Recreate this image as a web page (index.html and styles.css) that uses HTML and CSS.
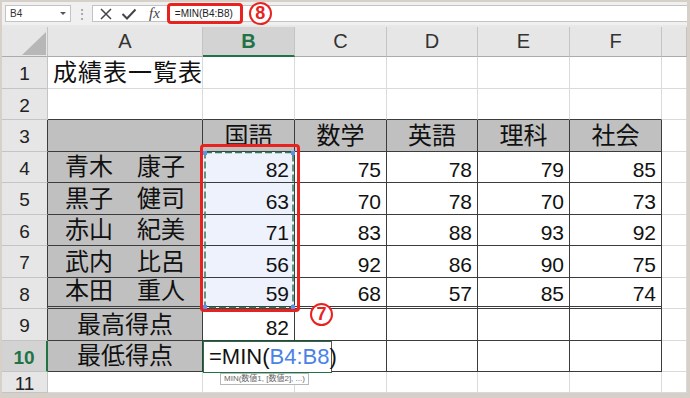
FILE: index.html
```html
<!DOCTYPE html>
<html lang="ja">
<head>
    <meta charset="UTF-8">
    <meta name="viewport" content="width=device-width, initial-scale=1.0">
    <title>成績表一覧表 - MIN関数</title>
    <link rel="stylesheet" href="styles.css">
</head>
<body>
<div class="window">
    <div class="formula-bar">
        <div class="name-box">B4<span class="caret"></span></div>
        <div class="dots">⋮</div>
        <div class="fx-area">
            <svg class="btn" width="14" height="14" viewBox="0 0 14 14"><path d="M2 2L12 12M12 2L2 12" stroke="#444" stroke-width="1.5" fill="none"/></svg>
            <svg class="btn check" width="16" height="14" viewBox="0 0 16 14"><path d="M1.5 7L6 11.5L14.5 2.5" stroke="#444" stroke-width="2" fill="none"/></svg>
            <span class="fx">fx</span>
            <span class="formula">=MIN(B4:B8)</span>
            <span class="mark">8</span>
        </div>
    </div>

    <div class="sheet">
        <div class="grid">
            <div class="corner"><span class="tri"></span></div>
            <div class="ch">A</div><div class="ch sel">B</div><div class="ch">C</div><div class="ch">D</div><div class="ch">E</div><div class="ch">F</div><div class="ch"></div>

            <div class="rh">1</div>
            <div class="c jp title">成績表一覧表</div><div class="c"></div><div class="c"></div><div class="c"></div><div class="c"></div><div class="c"></div><div class="c"></div>

            <div class="rh">2</div>
            <div class="c top"></div><div class="c top"></div><div class="c top"></div><div class="c top"></div><div class="c top"></div><div class="c top"></div><div class="c"></div>

            <div class="rh edge">3</div>
            <div class="c t g"></div><div class="c t g jp ctr">国語</div><div class="c t g jp ctr">数学</div><div class="c t g jp ctr">英語</div><div class="c t g jp ctr">理科</div><div class="c t g jp ctr">社会</div><div class="c"></div>

            <div class="rh edge">4</div>
            <div class="c t g jp ctr">青木　康子</div><div class="c t hl num">82</div><div class="c t num">75</div><div class="c t num">78</div><div class="c t num">79</div><div class="c t num">85</div><div class="c"></div>

            <div class="rh edge">5</div>
            <div class="c t g jp ctr">黒子　健司</div><div class="c t hl num">63</div><div class="c t num">70</div><div class="c t num">78</div><div class="c t num">70</div><div class="c t num">73</div><div class="c"></div>

            <div class="rh edge">6</div>
            <div class="c t g jp ctr">赤山　紀美</div><div class="c t hl num">71</div><div class="c t num">83</div><div class="c t num">88</div><div class="c t num">93</div><div class="c t num">92</div><div class="c"></div>

            <div class="rh edge">7</div>
            <div class="c t g jp ctr">武内　比呂</div><div class="c t hl num">56</div><div class="c t num">92</div><div class="c t num">86</div><div class="c t num">90</div><div class="c t num">75</div><div class="c"></div>

            <div class="rh edge">8</div>
            <div class="c t g dbl jp ctr">本田　重人</div><div class="c t hl dbl num">59</div><div class="c t dbl num">68</div><div class="c t dbl num">57</div><div class="c t dbl num">85</div><div class="c t dbl num">74</div><div class="c"></div>

            <div class="rh edge">9</div>
            <div class="c t g jp ctr">最高得点</div><div class="c t num">82</div><div class="c t"></div><div class="c t"></div><div class="c t"></div><div class="c t"></div><div class="c"></div>

            <div class="rh edge sel">10</div>
            <div class="c t g jp ctr">最低得点</div><div class="c t"></div><div class="c t"></div><div class="c t"></div><div class="c t"></div><div class="c t"></div><div class="c"></div>

            <div class="rh">11</div>
            <div class="c"></div><div class="c"></div><div class="c"></div><div class="c"></div><div class="c"></div><div class="c"></div><div class="c"></div>
        </div>

        <!-- range reference marquee around B4:B8 -->
        <svg class="marquee" width="92" height="158" viewBox="0 0 92 158">
            <rect x="2" y="1.5" width="88" height="155" fill="none" stroke="#2f7a55" stroke-width="1.5" stroke-dasharray="7 3"/>
            <rect x="0" y="0" width="4" height="4" fill="#5b8ff0"/>
            <rect x="88" y="0" width="4" height="4" fill="#5b8ff0"/>
            <rect x="0" y="154" width="4" height="4" fill="#5b8ff0"/>
            <rect x="88" y="154" width="4" height="4" fill="#5b8ff0"/>
        </svg>
        <div class="callout"></div>
        <span class="mark mark-7">7</span>

        <div class="edit">=MIN(<span class="ref">B4:B8</span>)</div>
        <div class="tip">MIN(数値1, [数値2], ...)</div>
    </div>
</div>
</body>
</html>
```

FILE: styles.css
```css
body {
    margin: 0;
    font-family: "Liberation Sans", "Noto Sans CJK JP", sans-serif;
}
.window {
    width: 690px;
    height: 398px;
    box-sizing: border-box;
    border: solid #d6d0c9;
    border-width: 2px 3px 5px 2px;
    background: #e8e8e8;
    overflow: hidden;
}

/* formula bar */
.formula-bar {
    height: 23px;
    display: flex;
    align-items: center;
    background: #f0f0f0;
    padding-left: 3px;
}
.name-box {
    width: 66px;
    height: 17px;
    box-sizing: border-box;
    border: 1px solid #c3c3c3;
    background: #fff;
    font-size: 10px;
    color: #333;
    display: flex;
    align-items: center;
    justify-content: space-between;
    padding: 0 4px;
}
.caret {
    border: 3px solid transparent;
    border-top: 3px solid #555;
    margin-top: 3px;
}
.dots {
    width: 21px;
    text-align: center;
    color: #888;
    font-size: 12px;
}
.fx-area {
    flex: 1;
    height: 17px;
    box-sizing: border-box;
    border: 1px solid #c3c3c3;
    border-right: none;
    background: #fff;
    display: flex;
    align-items: center;
    padding-left: 6px;
}
.btn {
    margin-right: 8px;
}
.check {
    margin-right: 12px;
}
.fx {
    font-family: "Liberation Serif", serif;
    font-style: italic;
    font-size: 15px;
    color: #444;
    margin-right: 7px;
}
.formula {
    width: 76px;
    height: 21px;
    box-sizing: border-box;
    border: 3px solid #e8231f;
    border-radius: 4px;
    font-size: 10px;
    color: #222;
    display: flex;
    align-items: center;
    padding-left: 5px;
}
.mark {
    width: 23px;
    height: 23px;
    box-sizing: border-box;
    border: 2px solid #e8231f;
    border-radius: 50%;
    color: #e8231f;
    font-weight: bold;
    font-size: 18px;
    display: flex;
    align-items: center;
    justify-content: center;
    margin-left: 6px;
    background: #fff;
}

/* sheet */
.sheet {
    position: relative;
    height: 366px;
    margin-top: 2px;
    background: #fff;
    overflow: hidden;
}
.grid {
    display: grid;
    grid-template-columns: 46px 155px 92px 92px 91px 92px 92px 25px;
    grid-template-rows: 30px repeat(10, 31.5px) 21px;
}
.grid > div {
    box-sizing: border-box;
    border-right: 1px solid #dadada;
    border-bottom: 1px solid #dadada;
    display: flex;
    align-items: flex-end;
    padding: 0 5px;
    font-size: 21px;
    line-height: 25px;
    color: #111;
    white-space: nowrap;
    min-width: 0;
}
.grid > .corner {
    background: #e6e6e6;
    border-right-color: #c4c4c4;
    border-bottom-color: #ababab;
    justify-content: flex-end;
    padding: 0 1px 1px 0;
}
.tri {
    width: 24px;
    height: 23px;
    background: #b7b7b7;
    clip-path: polygon(100% 0, 100% 100%, 0 100%);
}
.grid > .ch {
    background: #e6e6e6;
    border-right-color: #c4c4c4;
    border-bottom-color: #ababab;
    justify-content: center;
    align-items: center;
    font-size: 20px;
    color: #333;
}
.grid > .ch.sel {
    background: #d3d3d3;
    border-bottom: 2px solid #217346;
    color: #217346;
    font-weight: bold;
}
.grid > .rh {
    background: #e6e6e6;
    border-right-color: #c4c4c4;
    border-bottom-color: #c4c4c4;
    justify-content: center;
    align-items: center;
    font-size: 19px;
    color: #222;
    padding: 3px 0 0;
}
.grid > .rh.edge {
    border-right-color: #3c3c3c;
}
.grid > .rh.sel {
    background: #d3d3d3;
    border-right: 2px solid #217346;
    color: #217346;
    font-weight: bold;
}
.grid > .top {
    border-bottom-color: #3c3c3c;
}
.grid > .t {
    border-right-color: #3c3c3c;
    border-bottom-color: #3c3c3c;
}
.grid > .dbl {
    border-bottom: 3px double #3c3c3c;
}
.grid > .g {
    background: #c0c0c0;
}
.grid > .hl {
    background: #eef2fc;
}
.grid > .jp {
    font-size: 24px;
    line-height: 30px;
}
.grid > .title {
    letter-spacing: 1px;
}
.grid > .ctr {
    justify-content: center;
}
.grid > .num {
    justify-content: flex-end;
}

/* overlays */
.marquee {
    position: absolute;
    left: 201px;
    top: 123.5px;
}
.callout {
    position: absolute;
    left: 198px;
    top: 117px;
    width: 100px;
    height: 168px;
    box-sizing: border-box;
    border: 3px solid #e8231f;
    border-radius: 4px;
}
.mark-7 {
    position: absolute;
    left: 308px;
    top: 276px;
    margin: 0;
}
.edit {
    position: absolute;
    left: 201px;
    top: 313.5px;
    width: 129px;
    height: 32px;
    box-sizing: border-box;
    border: 1px solid #217346;
    border-right-color: #555;
    background: #fff;
    font-size: 22px;
    line-height: 30px;
    padding-left: 5px;
    white-space: nowrap;
    color: #111;
}
.ref {
    color: #4a82e8;
}
.tip {
    position: absolute;
    left: 218px;
    top: 346px;
    height: 12px;
    box-sizing: border-box;
    border: 1px solid #b8b8b8;
    background: #fff;
    font-size: 8px;
    line-height: 10px;
    color: #666;
    padding: 0 3px;
    white-space: nowrap;
}
```
